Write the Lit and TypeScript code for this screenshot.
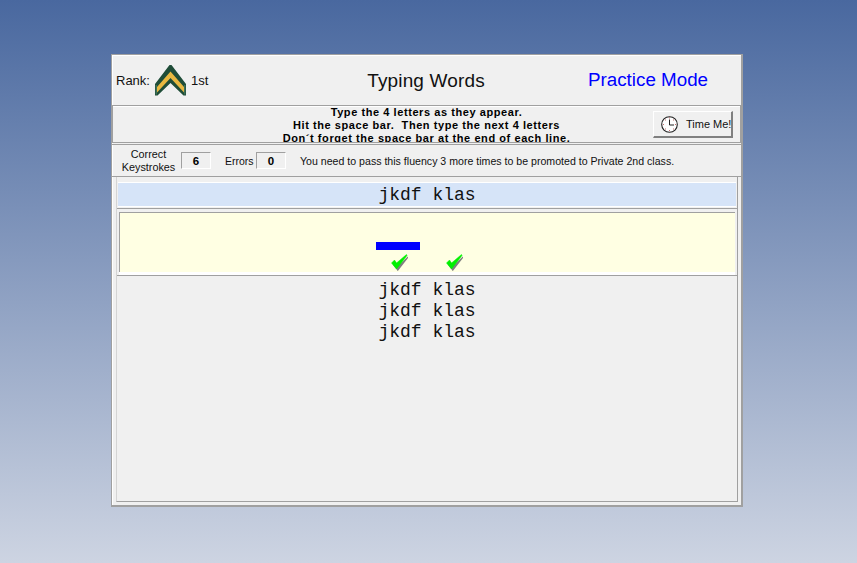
import { LitElement, html, css } from "lit";
import { customElement } from "lit/decorators.js";

@customElement("app-root")
export class AppRoot extends LitElement {
  static styles = css`
    :host { display: block; width: 857px; height: 563px; box-sizing: border-box; padding: 54px 114px 56px 111px;
      background: linear-gradient(180deg, #49689f 0%, #cdd4e2 100%); font-family: "Liberation Sans", Arial, sans-serif; color: #000; overflow: hidden; }
    .win { width: 632px; height: 453px; box-sizing: border-box; background: #f0f0f0; border: 1px solid #a0a0a0; border-right-width: 2px; border-bottom-width: 2px; display: flex; flex-direction: column; box-shadow: inset 1px 1px 0 #fff; }
    .head { height: 50px; flex: none; display: grid; grid-template-columns: 200px 228px 1fr; align-items: center; }
    .rank { display: flex; align-items: center; font-size: 13px; color: #111; padding-left: 4px; }
    .rank svg { margin: 0 5px 0 5px; flex: none; }
    .title { font-size: 19px; letter-spacing: 0.15px; text-align: center; padding-top: 2px; color: #111; }
    .mode { font-size: 18.8px; color: #0000ff; margin-left: 48px; white-space: nowrap; }
    .instr { height: 38px; flex: none; box-sizing: border-box; border: 1px solid #a0a0a0; box-shadow: inset 0 1px 0 #fff; position: relative; overflow: hidden; }
    .lines { text-align: center; font-size: 11px; font-weight: 700; line-height: 13px; letter-spacing: 0.57px; white-space: nowrap; }
    .btn { position: absolute; top: 5px; left: 540px; box-sizing: border-box; width: 80px; height: 27px; border: 1px solid #fff; border-right: 2px solid #808080; border-bottom: 2px solid #808080; display: flex; align-items: center; gap: 8px; padding: 0 0 0 7px; font-size: 11px; background: #f0f0f0; font-family: inherit; color: #111; white-space: nowrap; }
    .stats { height: 33px; flex: none; margin-top: 1px; display: flex; align-items: center; font-size: 11px; color: #111; border-top: 1px solid #a0a0a0; border-bottom: 1px solid #a0a0a0; box-sizing: border-box; }
    .ck { box-sizing: border-box; width: 69px; padding-left: 4px; text-align: center; line-height: 13px; font-size: 10.8px; }
    .box { box-sizing: border-box; width: 30px; height: 17px; border: 1px solid #a0a0a0; border-right-color: #fff; border-bottom-color: #fff; display: flex; align-items: center; justify-content: center; font-weight: 700; font-size: 11.5px; color: #000; }
    .err { margin-left: 14px; width: 31px; font-size: 10.5px; }
    .msg { margin-left: 14px; font-size: 10.6px; white-space: nowrap; }
    .main { flex: 1; min-height: 0; box-sizing: border-box; margin: 0 3px 3px 4px; display: flex; flex-direction: column; border-bottom: 1px solid #a0a0a0; border-right: 1px solid #a0a0a0; border-left: 1px solid #d4d4d4; }
    .word { font-family: "Liberation Mono", "Courier New", monospace; font-size: 18px; line-height: 21px; text-align: center; color: #111; white-space: pre; }
    .cur { flex: none; height: 23px; box-sizing: border-box; padding-top: 1px; margin: 6px 1px 2px 1px; background: #d6e4f8; line-height: 23px; box-shadow: 0 -1px 0 #fff, 0 1px 0 #fff; }
    .sep { flex: none; height: 1px; background: #a0a0a0; margin-bottom: 3px; }
    .typing { flex: none; height: 59px; box-sizing: content-box; margin: 0 2px 3px 2px; background: #ffffe3; border-top: 1px solid #a0a0a0; border-left: 1px solid #a0a0a0; box-shadow: 0 3px 0 #fff; display: flex; flex-direction: column; align-items: center; }
    .bar { width: 44px; height: 8px; background: #0000ff; margin: 29px 0 0 -60px; flex: none; }
    .checks { display: flex; gap: 38px; margin: 4px 0 0 -2px; }
    .rest { border-top: 1px solid #a0a0a0; padding-top: 4px; flex: 1; }
  `;

  check() {
    return html`<svg width="17" height="17" viewBox="0 0 17 17"><path d="M1 10 L6 16.5 L16.5 3 L16 2 L6.5 11 L4 7.5 Z" fill="#7f7f7f" transform="translate(.8 .6)"/><path d="M.5 9 L5.5 15 L16 1.5 L15.5 .5 L5.5 9 L3.5 6 Z" fill="#00f000" stroke="#00f000" stroke-width=".5"/></svg>`;
  }

  render() {
    return html`<div class="win">
      <div class="head">
        <div class="rank">Rank:
          <svg width="31" height="31" viewBox="0 0 31 31">
            <path d="M14.5 0 H16.5 L31 19 V30.5 H28.5 L15.5 18 L2.5 30.5 H0 V19 Z" fill="#1f4d38"/>
            <path d="M15.5 6.5 L29 22 V27.5 L15.5 13 L2 27.5 V22 Z" fill="#e8b840"/>
            <path d="M.7 20 H1.7 V29.5 H.7 Z M29.3 20 H30.3 V29.5 H29.3 Z" fill="#4b8066"/>
          </svg>1st</div>
        <div class="title">Typing Words</div>
        <div class="mode">Practice Mode</div>
      </div>
      <div class="instr">
        <div class="lines">Type the 4 letters as they appear.<br>Hit the space bar.&nbsp; Then type the next 4 letters<br>Don´t forget the space bar at the end of each line.</div>
        <button class="btn">
          <svg width="17" height="17" viewBox="0 0 17 17" style="flex:none"><circle cx="8.5" cy="8.5" r="7.8" fill="#fff" stroke="#222" stroke-width="1.1"/><path d="M8.5 3.5 V9 H13" fill="none" stroke="#222"/><path d="M8.2 2h.6M8.2 14.5h.6M2 8.5h.6M14.4 8.5h.6M4 4h.6M12.4 4h.6M4 13h.6M12.4 13h.6" stroke="#a01010"/></svg>
          <span>Time Me!</span>
        </button>
      </div>
      <div class="stats">
        <div class="ck">Correct<br>Keystrokes</div>
        <div class="box">6</div>
        <div class="err">Errors</div>
        <div class="box">0</div>
        <div class="msg">You need to pass this fluency 3 more times to be promoted to Private 2nd class.</div>
      </div>
      <div class="main">
        <div class="word cur">jkdf klas</div>
        <div class="sep"></div>
        <div class="typing">
          <div class="bar"></div>
          <div class="checks">${this.check()}${this.check()}</div>
        </div>
        <div class="rest">
          <div class="word">jkdf klas</div>
          <div class="word">jkdf klas</div>
          <div class="word">jkdf klas</div>
        </div>
      </div>
    </div>`;
  }
}
